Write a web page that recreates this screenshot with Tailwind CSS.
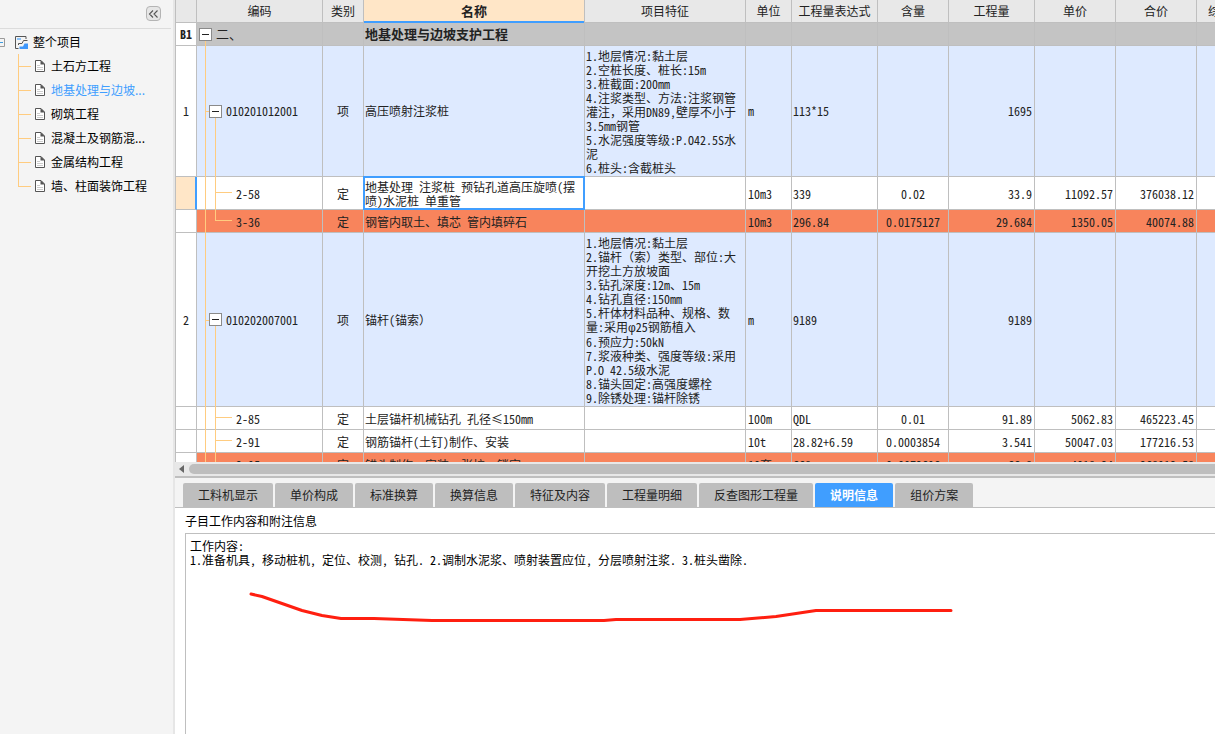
<!DOCTYPE html>
<html lang="zh-CN">
<head>
<meta charset="utf-8">
<title>地基处理与边坡支护工程</title>
<script src="https://cdn.jsdelivr.net/npm/@tailwindcss/browser@4"></script>
</head>
<body class="flex h-screen overflow-hidden bg-white font-['Noto_Sans_CJK_SC',sans-serif] text-xs text-black">

<aside class="flex w-[175px] shrink-0 flex-col border-r-2 border-[#e6e6e6] bg-[#f4f4f4]">
  <div class="mr-0.5 flex h-[29px] items-start justify-end border-b border-[#dcdcdc] pt-1.5 pr-2.5">
    <button type="button" aria-label="收起" class="flex size-[15px] items-center justify-center rounded-sm border border-[#b4b4b4] bg-[#e6e6e6]">
      <svg class="h-2 w-[11px]" viewBox="0 0 11 8" fill="none" stroke="#555" stroke-width="1.1"><path d="M5 .5 1.5 4 5 7.5M9.500 .5 6 4l3.500 3.500"/></svg>
    </button>
  </div>
  <nav class="pt-px">
    <div class="flex h-6 items-center">
      <svg class="mr-2.5 h-[9px] w-[5px]" viewBox="0 0 5 9" fill="none"><path d="M0 .5h4.500v8H0" stroke="#9a9a9a"/><path d="M0 4.500h3" stroke="#3d9be0"/></svg>
      <svg class="mr-[5px] h-[13px] w-[13px]" viewBox="0 0 13 13" fill="none"><path d="M3.500 12.500h-3V.500h10.500V3" stroke="#555"/><path d="M2 3h4" stroke="#8cc4fa" stroke-width="2"/><path d="M3.500 9V7.500h3.500L8.500 4.500h4" stroke="#555"/><path d="M4.500 13v-2.500H8L9.500 7.500H13V13z" fill="#3f97fb"/></svg>
      <a href="#" class="leading-[18px]">整个项目</a>
    </div>
    <ul class="relative pl-[18px]">
      <li class="absolute top-0 left-[18px] h-[132px] w-px bg-[#ffcc80]" aria-hidden="true"></li>
      <li class="flex h-6 items-center"><span class="mr-1 h-px w-[13px] bg-[#ffcc80]"></span><svg class="mr-1.5 h-3 w-2.5 shrink-0" viewBox="0 0 10 12" fill="#fff"><path d="M.5.5h5.500l3.500 3.500v7.500h-9z" stroke="#555"/><path d="M5.500 0 10 4.500H5.500z" fill="#555"/><path d="M2 5.500h3M2 7.500h6M2 9.500h6" stroke="#ccc"/></svg><a href="#">土石方工程</a></li>
      <li class="flex h-6 items-center"><span class="mr-1 h-px w-[13px] bg-[#ffcc80]"></span><svg class="mr-1.5 h-3 w-2.5 shrink-0" viewBox="0 0 10 12" fill="#fff"><path d="M.5.5h5.500l3.500 3.500v7.500h-9z" stroke="#555"/><path d="M5.500 0 10 4.500H5.500z" fill="#555"/><path d="M2 5.500h3M2 7.500h6M2 9.500h6" stroke="#ccc"/></svg><a href="#" class="text-[#409eff]">地基处理与边坡...</a></li>
      <li class="flex h-6 items-center"><span class="mr-1 h-px w-[13px] bg-[#ffcc80]"></span><svg class="mr-1.5 h-3 w-2.5 shrink-0" viewBox="0 0 10 12" fill="#fff"><path d="M.5.5h5.500l3.500 3.500v7.500h-9z" stroke="#555"/><path d="M5.500 0 10 4.500H5.500z" fill="#555"/><path d="M2 5.500h3M2 7.500h6M2 9.500h6" stroke="#ccc"/></svg><a href="#">砌筑工程</a></li>
      <li class="flex h-6 items-center"><span class="mr-1 h-px w-[13px] bg-[#ffcc80]"></span><svg class="mr-1.5 h-3 w-2.5 shrink-0" viewBox="0 0 10 12" fill="#fff"><path d="M.5.5h5.500l3.500 3.500v7.500h-9z" stroke="#555"/><path d="M5.500 0 10 4.500H5.500z" fill="#555"/><path d="M2 5.500h3M2 7.500h6M2 9.500h6" stroke="#ccc"/></svg><a href="#">混凝土及钢筋混...</a></li>
      <li class="flex h-6 items-center"><span class="mr-1 h-px w-[13px] bg-[#ffcc80]"></span><svg class="mr-1.5 h-3 w-2.5 shrink-0" viewBox="0 0 10 12" fill="#fff"><path d="M.5.5h5.500l3.500 3.500v7.500h-9z" stroke="#555"/><path d="M5.500 0 10 4.500H5.500z" fill="#555"/><path d="M2 5.500h3M2 7.500h6M2 9.500h6" stroke="#ccc"/></svg><a href="#">金属结构工程</a></li>
      <li class="flex h-6 items-center"><span class="mr-1 h-px w-[13px] bg-[#ffcc80]"></span><svg class="mr-1.5 h-3 w-2.5 shrink-0" viewBox="0 0 10 12" fill="#fff"><path d="M.5.5h5.500l3.500 3.500v7.500h-9z" stroke="#555"/><path d="M5.500 0 10 4.500H5.500z" fill="#555"/><path d="M2 5.500h3M2 7.500h6M2 9.500h6" stroke="#ccc"/></svg><a href="#">墙、柱面装饰工程</a></li>
    </ul>
  </nav>
</aside>

<main class="flex min-w-0 grow flex-col">
  <section class="h-[462px] shrink-0 overflow-hidden border-l border-[#bfbfbf]">
    <table class="w-[1101px] table-fixed border-separate border-spacing-0 text-xs leading-[14px] whitespace-nowrap text-[#222] [font-feature-settings:'hwid'] [&_td]:border-r [&_td]:border-b [&_td]:border-[#bfbfbf] [&_td]:p-0 [&_th]:border-r [&_th]:border-b [&_th]:border-[#bfbfbf] [&_th]:p-0 [&_th]:font-normal">
      <colgroup>
        <col class="w-[21px]"><col class="w-[126px]"><col class="w-[41px]"><col class="w-[221px]"><col class="w-[161px]"><col class="w-[46px]"><col class="w-[86px]"><col class="w-[71px]"><col class="w-[86px]"><col class="w-[81px]"><col class="w-[81px]"><col>
      </colgroup>
      <thead>
        <tr class="h-[23px] bg-[#e8e8e8]">
          <th></th><th>编码</th><th>类别</th>
          <th class="bg-[#ffe6c7]"><div class="-mb-px flex h-[23px] items-center justify-center border-b-2 border-[#409eff] text-[13px] font-bold">名称</div></th>
          <th>项目特征</th><th>单位</th><th>工程量表达式</th><th>含量</th><th>工程量</th><th>单价</th><th>合价</th><th class="text-left"><span class="pl-[11px]">综合单价</span></th>
        </tr>
      </thead>
      <tbody>
        <tr class="h-[23px] bg-[#c4c4c4]">
          <th scope="row" class="bg-white"><b>B1</b></th>
          <td class="relative">
            <i class="absolute top-[18px] -bottom-px left-2 w-px bg-[#ffcc80]"></i>
            <div class="relative flex items-center gap-1 pl-0.5"><button type="button" aria-label="折叠" class="flex size-[13px] items-center justify-center border border-[#8a8a8a] bg-white"><span class="h-px w-[7px] bg-[#222]"></span></button><span class="text-[13px]">二、</span></div>
          </td>
          <td></td><td class="text-[13px] font-bold"><span class="pl-px">地基处理与边坡支护工程</span></td><td></td><td></td><td></td><td></td><td></td><td></td><td></td><td></td>
        </tr>
        <tr class="h-[131px] bg-[#deeaff]">
          <th scope="row" class="bg-white">1</th>
          <td class="relative">
            <i class="absolute top-0 -bottom-px left-2 w-px bg-[#ffcc80]"></i><i class="absolute top-1/2 left-2 h-px w-1 bg-[#ffcc80]"></i><i class="absolute top-1/2 -bottom-px left-[18px] w-px bg-[#ffcc80]"></i>
            <div class="relative flex items-center gap-1 pl-3"><button type="button" aria-label="折叠" class="flex size-[13px] items-center justify-center border border-[#8a8a8a] bg-white"><span class="h-px w-[7px] bg-[#222]"></span></button><span>010201012001</span></div>
          </td>
          <td class="text-center">项</td><td><span class="pl-px">高压喷射注浆桩</span></td>
          <td><div class="pt-0.5 pl-px">1.地层情况:黏土层<br>2.空桩长度、桩长:15m<br>3.桩截面:200mm<br>4.注浆类型、方法:注浆钢管<br>灌注<span class="[font-feature-settings:normal]">，</span>采用DN89,壁厚不小于<br>3.5mm钢管<br>5.水泥强度等级:P.O42.5S水<br>泥<br>6.桩头:含截桩头</div></td>
          <td><span class="pl-0.5">m</span></td><td><span class="pl-px">113*15</span></td><td></td><td class="text-right"><span class="pr-0.5">1695</span></td><td></td><td></td><td></td>
        </tr>
        <tr class="h-[33px] bg-white [&>td]:pt-0.5!">
          <th scope="row" class="border-r-2! border-r-[#409eff]! bg-[#ffe6c7]"></th>
          <td class="relative">
            <i class="absolute top-0 -bottom-px left-2 w-px bg-[#ffcc80]"></i><i class="absolute top-0 -bottom-px left-[18px] w-px bg-[#ffcc80]"></i><i class="absolute top-[15px] left-[19px] h-px w-4 bg-[#ffcc80]"></i>
            <span class="pl-[39px]">2-58</span>
          </td>
          <td class="text-center">定</td><td class="relative"><span class="absolute -inset-px border-2 border-[#409eff]"></span><div class="pl-px">地基处理 注浆桩 预钻孔道高压旋喷(摆<br>喷)水泥桩 单重管</div></td><td></td>
          <td><span class="pl-0.5">10m3</span></td><td><span class="pl-px">339</span></td><td class="text-center">0.02</td><td class="text-right"><span class="pr-0.5">33.9</span></td><td class="text-right"><span class="pr-0.5">11092.57</span></td><td class="text-right"><span class="pr-0.5">376038.12</span></td><td></td>
        </tr>
        <tr class="h-[23px] bg-[#f8845c] [&>td]:pt-0.5!">
          <th scope="row" class="bg-white"></th>
          <td class="relative">
            <i class="absolute top-0 -bottom-px left-2 w-px bg-[#ffcc80]"></i><i class="absolute top-0 left-[18px] h-[11px] w-[17px] border-b border-l border-[#ffcc80]"></i>
            <span class="pl-[39px]">3-36</span>
          </td>
          <td class="text-center">定</td><td><span class="pl-px">钢管内取土、填芯 管内填碎石</span></td><td></td>
          <td><span class="pl-0.5">10m3</span></td><td><span class="pl-px">296.84</span></td><td class="text-center">0.0175127</td><td class="text-right"><span class="pr-0.5">29.684</span></td><td class="text-right"><span class="pr-0.5">1350.05</span></td><td class="text-right"><span class="pr-0.5">40074.88</span></td><td></td>
        </tr>
        <tr class="h-[174px] bg-[#deeaff]">
          <th scope="row" class="bg-white">2</th>
          <td class="relative">
            <i class="absolute top-0 -bottom-px left-2 w-px bg-[#ffcc80]"></i><i class="absolute top-1/2 left-2 h-px w-1 bg-[#ffcc80]"></i><i class="absolute top-1/2 -bottom-px left-[18px] w-px bg-[#ffcc80]"></i>
            <div class="relative flex items-center gap-1 pl-3"><button type="button" aria-label="折叠" class="flex size-[13px] items-center justify-center border border-[#8a8a8a] bg-white"><span class="h-px w-[7px] bg-[#222]"></span></button><span>010202007001</span></div>
          </td>
          <td class="text-center">项</td><td><span class="pl-px">锚杆(锚索<span class="[font-feature-settings:normal]">）</span></span></td>
          <td><div class="pt-0.5 pl-px">1.地层情况:黏土层<br>2.锚杆<span class="[font-feature-settings:normal]">（索）</span>类型、部位:大<br>开挖土方放坡面<br>3.钻孔深度:12m、15m<br>4.钻孔直径:150mm<br>5.杆体材料品种、规格、数<br>量:采用<span class="font-['Liberation_Sans']">φ</span>25钢筋植入<br>6.预应力:50kN<br>7.浆液种类、强度等级:采用<br>P.O 42.5级水泥<br>8.锚头固定:高强度螺栓<br>9.除锈处理:锚杆除锈</div></td>
          <td><span class="pl-0.5">m</span></td><td><span class="pl-px">9189</span></td><td></td><td class="text-right"><span class="pr-0.5">9189</span></td><td></td><td></td><td></td>
        </tr>
        <tr class="h-[23px] bg-white [&>td]:pt-0.5!">
          <th scope="row"></th>
          <td class="relative">
            <i class="absolute top-0 -bottom-px left-2 w-px bg-[#ffcc80]"></i><i class="absolute top-0 -bottom-px left-[18px] w-px bg-[#ffcc80]"></i><i class="absolute top-2.5 left-[19px] h-px w-4 bg-[#ffcc80]"></i>
            <span class="pl-[39px]">2-85</span>
          </td>
          <td class="text-center">定</td><td><span class="pl-px">土层锚杆机械钻孔 孔径≤150mm</span></td><td></td>
          <td><span class="pl-0.5">100m</span></td><td><span class="pl-px">QDL</span></td><td class="text-center">0.01</td><td class="text-right"><span class="pr-0.5">91.89</span></td><td class="text-right"><span class="pr-0.5">5062.83</span></td><td class="text-right"><span class="pr-0.5">465223.45</span></td><td></td>
        </tr>
        <tr class="h-[23px] bg-white [&>td]:pt-0.5!">
          <th scope="row"></th>
          <td class="relative">
            <i class="absolute top-0 -bottom-px left-2 w-px bg-[#ffcc80]"></i><i class="absolute top-0 -bottom-px left-[18px] w-px bg-[#ffcc80]"></i><i class="absolute top-2.5 left-[19px] h-px w-4 bg-[#ffcc80]"></i>
            <span class="pl-[39px]">2-91</span>
          </td>
          <td class="text-center">定</td><td><span class="pl-px">钢筋锚杆(土钉)制作、安装</span></td><td></td>
          <td><span class="pl-0.5">10t</span></td><td><span class="pl-px">28.82+6.59</span></td><td class="text-center">0.0003854</td><td class="text-right"><span class="pr-0.5">3.541</span></td><td class="text-right"><span class="pr-0.5">50047.03</span></td><td class="text-right"><span class="pr-0.5">177216.53</span></td><td></td>
        </tr>
        <tr class="h-[23px] bg-[#f8845c] [&>td]:pt-0.5!">
          <th scope="row" class="bg-white"></th>
          <td class="relative">
            <i class="absolute top-0 -bottom-px left-2 w-px bg-[#ffcc80]"></i><i class="absolute top-0 left-[18px] h-[11px] w-[17px] border-b border-l border-[#ffcc80]"></i>
            <span class="pl-[39px]">2-95</span>
          </td>
          <td class="text-center">定</td><td><span class="pl-px">锚头制作、安装、张拉、锁定</span></td><td></td>
          <td><span class="pl-0.5">10套</span></td><td><span class="pl-px">668</span></td><td class="text-center">0.0072696</td><td class="text-right"><span class="pr-0.5">66.8</span></td><td class="text-right"><span class="pr-0.5">4018.34</span></td><td class="text-right"><span class="pr-0.5">268913.58</span></td><td></td>
        </tr>
      </tbody>
    </table>
  </section>

  <div class="flex h-4 shrink-0 items-center gap-[5px] border-b-2 border-[#bfbfbf] bg-[#e8e8e8] pl-1">
    <button type="button" aria-label="向左滚动"><svg class="block h-2 w-[5px]" viewBox="0 0 5 8"><path d="M5 0v8L0 4z" fill="#666"/></svg></button>
    <div class="h-2.5 grow rounded-l-full bg-[#bebebe]"></div>
  </div>

  <div role="tablist" class="flex h-[30px] shrink-0 items-end gap-0.5 border-b border-[#bfbfbf] bg-[#f4f4f4] pl-2 text-[#222] [&>button]:h-6 [&>button]:shrink-0 [&>button]:rounded-t-xs [&>button]:px-[15px]">
    <button type="button" role="tab" class="bg-[#bebebe]">工料机显示</button>
    <button type="button" role="tab" class="bg-[#bebebe]">单价构成</button>
    <button type="button" role="tab" class="bg-[#bebebe]">标准换算</button>
    <button type="button" role="tab" class="bg-[#bebebe]">换算信息</button>
    <button type="button" role="tab" class="bg-[#bebebe]">特征及内容</button>
    <button type="button" role="tab" class="bg-[#bebebe]">工程量明细</button>
    <button type="button" role="tab" class="bg-[#bebebe]">反查图形工程量</button>
    <button type="button" role="tab" aria-selected="true" class="bg-[#409eff] font-bold text-white">说明信息</button>
    <button type="button" role="tab" class="bg-[#bebebe]">组价方案</button>
  </div>

  <section class="relative flex grow flex-col pl-2.5 [font-feature-settings:'hwid']">
    <label for="notes" class="flex h-[25px] items-center">子目工作内容和附注信息</label>
    <textarea id="notes" readonly class="w-full grow resize-none overflow-hidden border-t border-l border-[#bfbfbf] bg-white px-1 pt-[5px] leading-[14px] outline-none">工作内容:
1.准备机具, 移动桩机, 定位、校测, 钻孔. 2.调制水泥浆、喷射装置应位, 分层喷射注浆. 3.桩头凿除.</textarea>
    <svg class="pointer-events-none absolute top-20 left-[73px] h-10 w-[710px]" viewBox="0 0 710 40" fill="none" stroke="#ff1f10" stroke-width="3" stroke-linecap="round" stroke-linejoin="round"><path d="M3 6 14 8.500l20 7 20 7 20 5 19 3h33l58 2h172l12-1h124l36-3 40-6h135"/></svg>
  </section>
</main>
</body>
</html>
